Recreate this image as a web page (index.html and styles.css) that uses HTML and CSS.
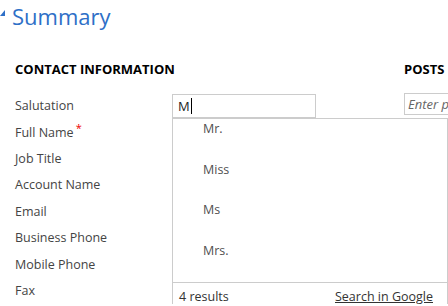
FILE: index.html
```html
<!DOCTYPE html>
<html>
<head>
    <title>Contact - Summary</title>
    <link rel="stylesheet" href="styles.css">
</head>
<body>
    <!-- Tab header -->
    <header class="tab-header">
        <svg class="tab-caret" width="6" height="30" viewBox="0 0 6 30">
            <polygon points="0,16 5,10 5,16" fill="#2e6fc7"/>
        </svg>
        <h1>Summary</h1>
    </header>

    <main class="sections">
        <section class="contact">
            <h2>CONTACT INFORMATION</h2>
            <div class="form">
                <div class="row">
                    <span class="label">Salutation</span>
                    <div class="field lookup">
                        <div class="textbox">M<span class="cursor"></span></div>
                        <!-- Autocomplete flyout -->
                        <div class="flyout">
                            <ul class="results">
                                <li>Mr.</li>
                                <li>Miss</li>
                                <li>Ms</li>
                                <li>Mrs.</li>
                            </ul>
                            <div class="flyout-footer">
                                <span>4 results</span>
                                <a href="#">Search in Google</a>
                            </div>
                        </div>
                    </div>
                </div>
                <div class="row"><span class="label">Full Name<span class="required">*</span></span></div>
                <div class="row"><span class="label">Job Title</span></div>
                <div class="row"><span class="label">Account Name</span></div>
                <div class="row"><span class="label">Email</span></div>
                <div class="row"><span class="label">Business Phone</span></div>
                <div class="row"><span class="label">Mobile Phone</span></div>
                <div class="row"><span class="label">Fax</span></div>
            </div>
        </section>

        <section class="posts">
            <h2>POSTS</h2>
            <div class="post-box">Enter p</div>
        </section>
    </main>
</body>
</html>
```

FILE: styles.css
```css
/* Summary form styles */
body {
    margin: 0;
    overflow: hidden;
    background: white;
    font-family: "Open Sans", "Noto Sans", sans-serif;
    color: #444;
}

.tab-header {
    display: flex;
    align-items: flex-start;
    height: 31px;
}

.tab-caret {
    flex: none;
}

.tab-header h1 {
    margin: 1px 0 0 6px;
    font-size: 22px;
    font-weight: normal;
    line-height: 30px;
    color: #2e6fc7;
}

.sections {
    display: flex;
}

.sections h2 {
    margin: 30px 0 16px;
    font-size: 13px;
    font-weight: bold;
    line-height: 16px;
    color: #000;
}

.contact {
    flex: none;
    width: 389px;
    padding-left: 15px;
}

.posts {
    flex: 1;
    min-width: 0;
}

.row {
    display: flex;
    height: 26.4px;
    align-items: center;
    font-size: 12.5px;
}

.label {
    width: 157px;
    flex: none;
    line-height: 18px;
}

.required {
    color: #e00;
    font-size: 11px;
    line-height: 0;
    vertical-align: 5px;
    margin-left: 2px;
}

.field {
    position: relative;
}

.textbox {
    width: 137px;
    height: 22px;
    border: 1px solid #ccc;
    padding-left: 5px;
    font-size: 13px;
    line-height: 22px;
    color: #222;
}

.cursor {
    display: inline-block;
    width: 1px;
    height: 16px;
    background: #000;
    vertical-align: -3px;
    margin-left: 1px;
}

.flyout {
    position: absolute;
    top: 24px;
    left: 0;
    width: 274px;
    background: white;
    border: 1px solid #ccc;
    z-index: 10;
}

.results {
    list-style: none;
    margin: 0;
    padding: 1px 0 0;
}

.results li {
    padding: 0 0 22.5px 30px;
    line-height: 18px;
    color: #505050;
}

.flyout-footer {
    display: flex;
    justify-content: space-between;
    border-top: 1px solid #ccc;
    padding: 5px 14px 8px 6px;
    line-height: 18px;
    color: #333;
}

.flyout-footer a {
    color: #333;
}

.post-box {
    height: 20px;
    margin-top: 1px;
    border: 1px solid #ccc;
    border-right: none;
    padding-left: 3px;
    font-size: 13px;
    font-style: italic;
    line-height: 20px;
    color: #666;
    white-space: nowrap;
    overflow: hidden;
}
```
